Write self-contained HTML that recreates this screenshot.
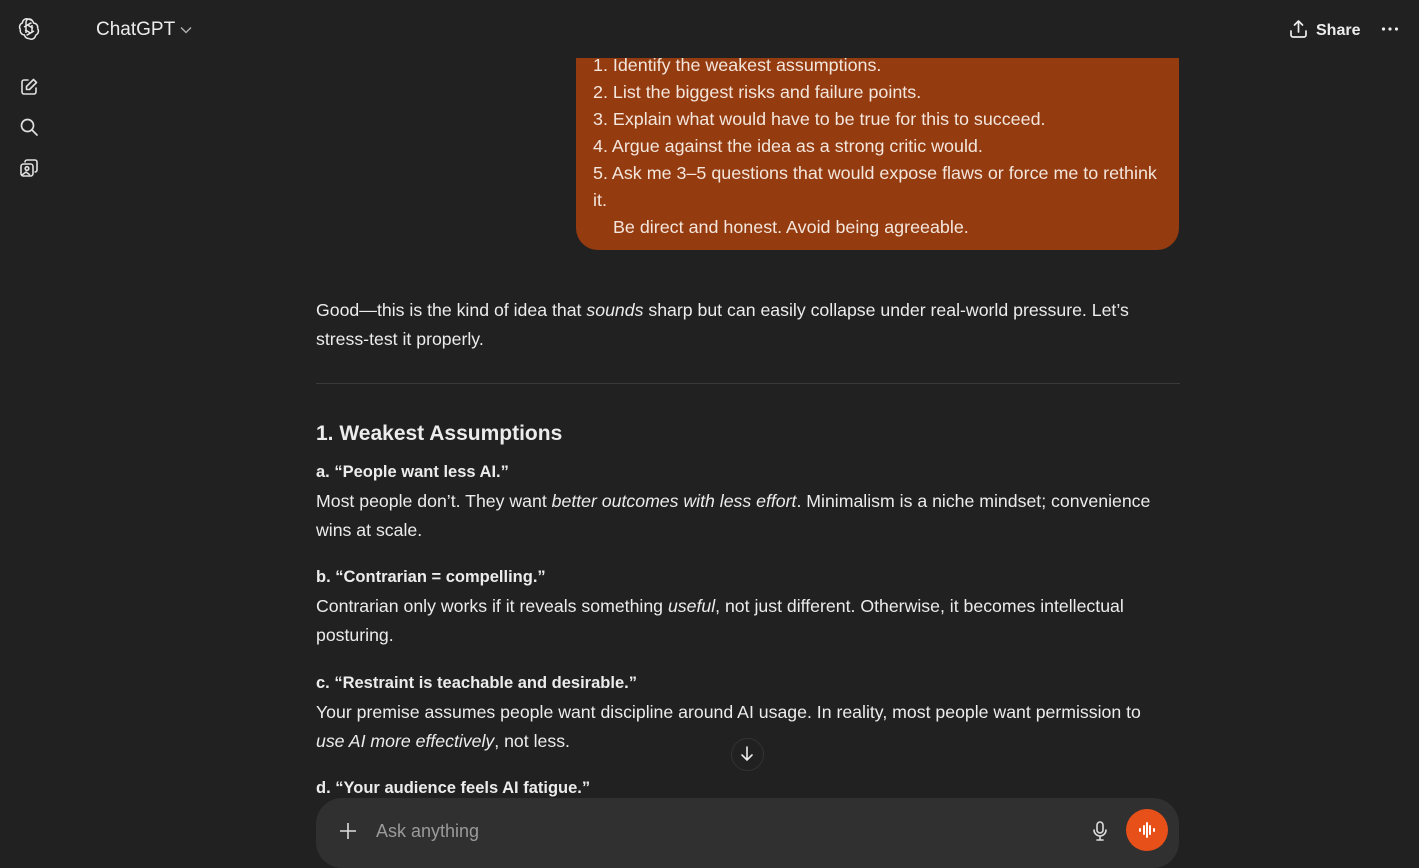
<!DOCTYPE html>
<html><head><meta charset="utf-8"><style>
*{margin:0;padding:0;box-sizing:border-box}
body{width:1419px;height:844px;background:#212121;overflow:hidden;position:relative;font-family:"Liberation Sans","DejaVu Sans",sans-serif;color:#ececec}
.l{position:absolute;white-space:nowrap;font-size:17.7px;line-height:20px}
.b{font-weight:bold;font-size:16.5px}
.u{font-size:17.9px}
.bub{position:absolute;left:576px;top:40px;width:603px;height:210px;background:#953b10;border-radius:0 0 22px 22px}
.hdr{position:absolute;left:0;top:0;width:1419px;height:58px;background:#212121}
.ic{position:absolute}
</style></head><body>
<div class="bub"></div>
<div class="l u" style="left:593px;top:55px;color:#f3e6dc">1. Identify the weakest assumptions.</div>
<div class="l u" style="left:593px;top:82px;color:#f3e6dc">2. List the biggest risks and failure points.</div>
<div class="l u" style="left:593px;top:109px;color:#f3e6dc">3. Explain what would have to be true for this to succeed.</div>
<div class="l u" style="left:593px;top:136px;color:#f3e6dc">4. Argue against the idea as a strong critic would.</div>
<div class="l u" style="left:593px;top:163px;color:#f3e6dc">5. Ask me 3–5 questions that would expose flaws or force me to rethink</div>
<div class="l u" style="left:593px;top:190px;color:#f3e6dc">it.</div>
<div class="l u" style="left:613px;top:217px;color:#f3e6dc">Be direct and honest. Avoid being agreeable.</div>
<div class="hdr"></div>
<svg class="ic" style="left:17px;top:17px" width="24" height="24" viewBox="0 0 24 24" fill="none" stroke="#e8e8e8" stroke-width="1.5" stroke-linejoin="round">
<g id="p"><path d="M9 8.5V5.3a3.3 3.3 0 0 1 6.3-1.4"/></g>
<path d="M12 2.5a4.3 4.3 0 0 1 4.6 3.6 4.3 4.3 0 0 1 4 5.4"/>
<path d="M20.6 11.5a4.3 4.3 0 0 1-2 6.6"/>
<path d="M18.6 18.1a4.3 4.3 0 0 1-6.6 3.4"/>
<path d="M12 21.5a4.3 4.3 0 0 1-4.6-3.6 4.3 4.3 0 0 1-4-5.4"/>
<path d="M3.4 12.5a4.3 4.3 0 0 1 2-6.6 4.3 4.3 0 0 1 6.6-3.4"/>
<path d="M9 16V8.8l5.5-3.1M15 8v7.2l-5.5 3.1M7 10l3.5-2 5.5 3.2M17 14l-3.5 2L8 12.8"/>
</svg>
<div class="l" style="left:96px;top:19px;font-size:19px;line-height:22px;color:#ececec">ChatGPT</div>
<svg class="ic" style="left:180px;top:25px" width="12" height="10" viewBox="0 0 12 10"><path d="M1 2.5l5 5 5-5" fill="none" stroke="#aaa" stroke-width="1.5"/></svg>
<svg class="ic" style="left:19px;top:77px" width="20" height="20" viewBox="0 0 20 20" fill="none" stroke="#e0e0e0" stroke-width="1.6" stroke-linecap="round" stroke-linejoin="round"><path d="M9 3H5a2 2 0 0 0-2 2v10a2 2 0 0 0 2 2h10a2 2 0 0 0 2-2v-4"/><path d="M14.5 2.5l3 3-7 7H7.5v-3z"/></svg>
<svg class="ic" style="left:19px;top:117px" width="20" height="20" viewBox="0 0 20 20" fill="none" stroke="#e0e0e0" stroke-width="1.7" stroke-linecap="round"><circle cx="8.5" cy="8.5" r="6"/><path d="M13 13l5 5"/></svg>
<svg class="ic" style="left:19px;top:158px" width="20" height="20" viewBox="0 0 20 20" fill="none" stroke="#e0e0e0" stroke-width="1.6" stroke-linejoin="round"><rect x="2" y="6" width="12" height="12" rx="2.5"/><path d="M6 4.5V4a2 2 0 0 1 2-2h8a2 2 0 0 1 2 2v8a2 2 0 0 1-2 2h-.5"/><circle cx="8" cy="10.5" r="1.8"/><path d="M3 17l4-3 4 3"/></svg>
<svg class="ic" style="left:1289px;top:19px" width="19" height="20" viewBox="0 0 19 20" fill="none" stroke="#ececec" stroke-width="1.7" stroke-linecap="round" stroke-linejoin="round"><path d="M9.5 13V2M5.5 6l4-4 4 4M2 12v4a2 2 0 0 0 2 2h11a2 2 0 0 0 2-2v-4"/></svg>
<div class="l b" style="left:1316px;top:21px;font-size:16px">Share</div>
<svg class="ic" style="left:1381px;top:26px" width="18" height="6" viewBox="0 0 18 6" fill="#ececec"><circle cx="2.5" cy="3" r="1.6"/><circle cx="9" cy="3" r="1.6"/><circle cx="15.5" cy="3" r="1.6"/></svg>

<div class="l" style="left:316px;top:300px">Good—this is the kind of idea that <i>sounds</i> sharp but can easily collapse under real-world pressure. Let’s</div>
<div class="l" style="left:316px;top:329px">stress-test it properly.</div>
<div style="position:absolute;left:316px;top:383px;width:864px;height:1px;background:#3a3a3a"></div>
<div class="l b" style="left:316px;top:422px;font-size:21px;line-height:24px">1. Weakest Assumptions</div>
<div class="l b" style="left:316px;top:462px">a. “People want less AI.”</div>
<div class="l" style="left:316px;top:491px">Most people don’t. They want <i>better outcomes with less effort</i>. Minimalism is a niche mindset; convenience</div>
<div class="l" style="left:316px;top:520px">wins at scale.</div>
<div class="l b" style="left:316px;top:567px">b. “Contrarian = compelling.”</div>
<div class="l" style="left:316px;top:596px">Contrarian only works if it reveals something <i>useful</i>, not just different. Otherwise, it becomes intellectual</div>
<div class="l" style="left:316px;top:625px">posturing.</div>
<div class="l b" style="left:316px;top:673px">c. “Restraint is teachable and desirable.”</div>
<div class="l" style="left:316px;top:702px">Your premise assumes people want discipline around AI usage. In reality, most people want permission to</div>
<div class="l" style="left:316px;top:731px"><i>use AI more effectively</i>, not less.</div>
<div class="l b" style="left:316px;top:778px">d. “Your audience feels AI fatigue.”</div>
<div style="position:absolute;left:731px;top:738px;width:33px;height:33px;border-radius:50%;background:#212121;border:1px solid #333"></div>
<svg class="ic" style="left:739px;top:745px" width="16" height="18" viewBox="0 0 16 18" fill="none" stroke="#ececec" stroke-width="1.6" stroke-linecap="round"><path d="M8 2v13M3 10l5 5 5-5"/></svg>
<div style="position:absolute;left:316px;top:798px;width:863px;height:70px;border-radius:26px;background:#303030"></div>
<svg class="ic" style="left:339px;top:822px" width="18" height="18" viewBox="0 0 18 18" stroke="#ddd" stroke-width="1.6"><path d="M9 1v16M1 9h16"/></svg>
<div class="l" style="left:376px;top:821px;font-size:18px;color:#9a9a9a">Ask anything</div>
<svg class="ic" style="left:1091px;top:820px" width="18" height="22" viewBox="0 0 18 22" fill="none" stroke="#ddd" stroke-width="1.6" stroke-linecap="round"><rect x="6" y="2" width="6" height="11" rx="3"/><path d="M3 10a6 6 0 0 0 12 0M9 16v4M6 20h6"/></svg>
<div style="position:absolute;left:1126px;top:809px;width:42px;height:42px;border-radius:50%;background:#e8501a"></div>
<svg class="ic" style="left:1137px;top:821px" width="20" height="18" viewBox="0 0 20 18" stroke="#fff" stroke-width="2" stroke-linecap="round"><path d="M3 8v2M7 5v8M10 2v14M13 5v8M17 8v2"/></svg>
</body></html>
